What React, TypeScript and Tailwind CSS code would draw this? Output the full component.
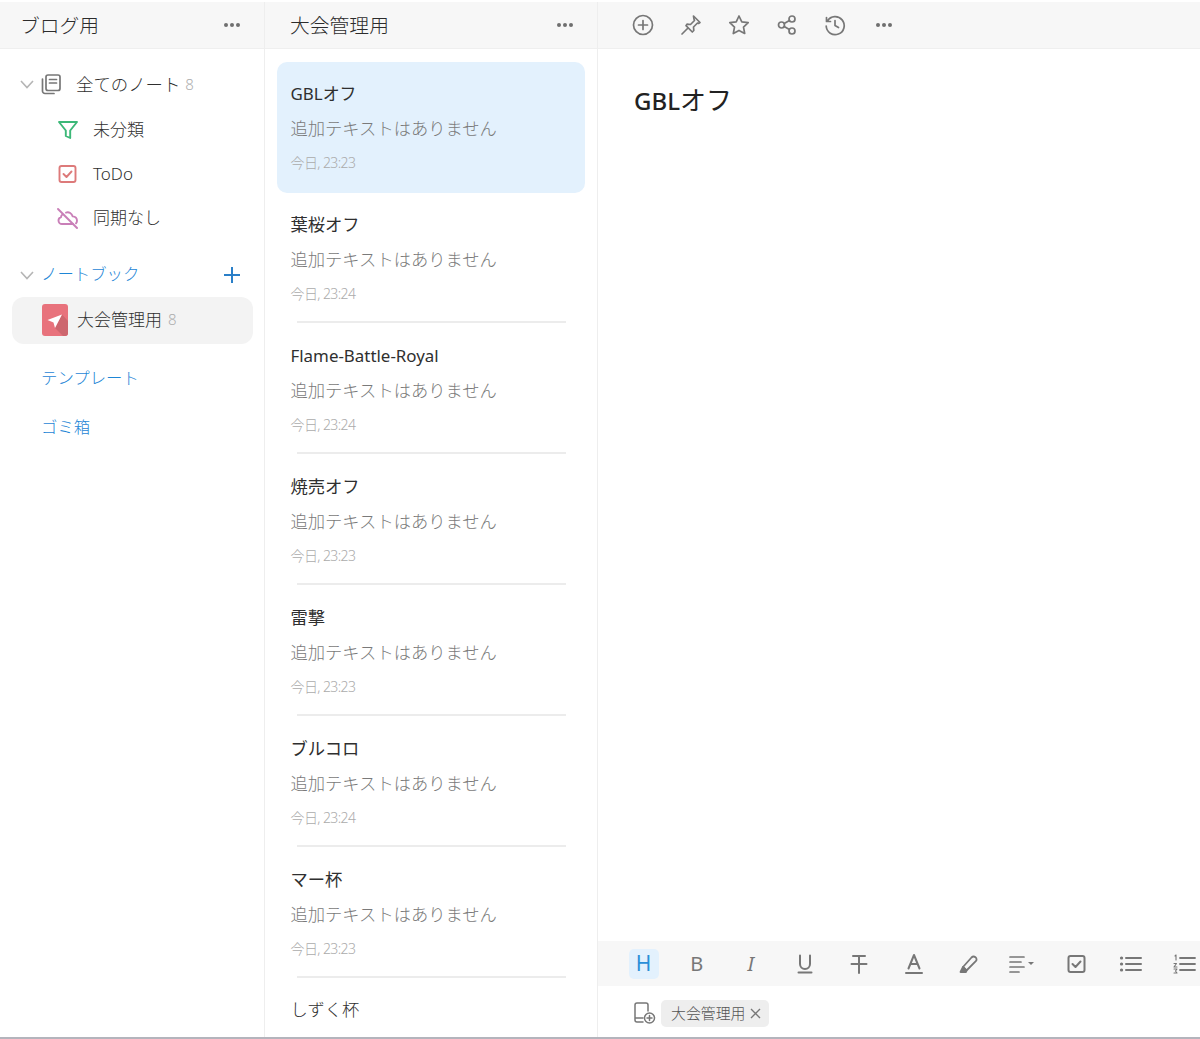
import React from "react";

const font = { fontFamily: '"Noto Sans", "Noto Sans CJK JP", sans-serif' };

function Dots() {
  return (
    <svg width="18" height="6" viewBox="0 0 18 6" fill="#6f6f6f">
      <circle cx="3" cy="3" r="2" />
      <circle cx="9" cy="3" r="2" />
      <circle cx="15" cy="3" r="2" />
    </svg>
  );
}

function Chevron() {
  return (
    <svg width="16" height="16" viewBox="0 0 16 16" fill="none" stroke="#b5b5b5" strokeWidth="1.6" className="shrink-0">
      <path d="M2 5l6 6.5L14 5" />
    </svg>
  );
}

function Sv({ children, w = 24, h = 24, sw = 1.7 }: { children: React.ReactNode; w?: number; h?: number; sw?: number }) {
  return (
    <svg width={w} height={h} viewBox={`0 0 ${w} ${h}`} fill="none" stroke="#777" strokeWidth={sw} strokeLinecap="round" strokeLinejoin="round" className="shrink-0">
      {children}
    </svg>
  );
}

const notes = [
  { t: "GBLオフ", d: "今日, 23:23", sel: true, small: true },
  { t: "葉桜オフ", d: "今日, 23:24" },
  { t: "Flame-Battle-Royal", d: "今日, 23:24", small: true },
  { t: "焼売オフ", d: "今日, 23:23" },
  { t: "雷撃", d: "今日, 23:23" },
  { t: "ブルコロ", d: "今日, 23:24" },
  { t: "マー杯", d: "今日, 23:23" },
];

function Note({ t, d, sel, small }: { t: string; d: string; sel?: boolean; small?: boolean }) {
  return (
    <div className={`relative h-[131px] w-[308px] shrink-0 rounded-[10px] pl-[13.5px] pt-[20px] ${sel ? "bg-[#e3f1fd]" : ""}`}>
      <div className={`h-[24px] leading-[24px] text-[#2f2f2f] ${small ? "text-[16.9px]" : "text-[17.3px]"}`}>{t}</div>
      <div className="mt-[11px] h-[24px] text-[17.3px] leading-[24px] font-light text-[#7a7a7a]">追加テキストはありません</div>
      <div className="mt-[12px] h-[20px] text-[14px] leading-[20px] font-light tracking-[-0.6px] text-[#ababab]">{d}</div>
      {!sel && <div className="absolute bottom-[1px] left-[20px] h-[2px] w-[269px] bg-[#ececec]" />}
    </div>
  );
}

export default function App() {
  return (
    <div style={font} className="flex h-[1039px] w-[1200px] flex-col overflow-hidden bg-white pt-[2px]">
      <div className="flex min-h-0 flex-1">
        {/* Sidebar */}
        <aside className="flex w-[265px] shrink-0 flex-col border-r border-[#eeeeee]">
          <header className="flex h-[47px] shrink-0 items-center justify-between border-b border-[#efefef] bg-[#f7f7f7] pl-[20px] pr-[23px]">
            <span className="pt-[2px] text-[19.8px] font-light text-[#2c2c2c]">ブログ用</span>
            <Dots />
          </header>
          <div className="flex flex-col pt-[12px]">
            <div className="flex h-[46px] items-center pl-[19px] text-[17.4px] font-light text-[#2f2f2f]">
              <Chevron />
              <span className="ml-[4px]">
                <Sv w={23} h={24}>
                  <rect x="7" y="3" width="14" height="15.5" rx="2" />
                  <path d="M10.5 7.5h7M10.5 11h7M3.5 7v12a2.5 2.5 0 0 0 2.5 2.5H15" />
                </Sv>
              </span>
              <span className="ml-[14px]">全てのノート</span>
              <span className="ml-[5px] text-[15px] text-[#adadad]">8</span>
            </div>
            <div className="flex h-[44px] items-center pl-[57px] pt-[2px] text-[17px] font-light text-[#2f2f2f]">
              <svg width="22" height="22" viewBox="0 0 22 22" fill="none" stroke="#3cb878" strokeWidth="1.9" strokeLinejoin="round" className="shrink-0">
                <path d="M2 3h18l-6.8 8.5V19l-4.4-2v-5.5z" />
              </svg>
              <span className="ml-[14px]">未分類</span>
            </div>
            <div className="flex h-[44px] items-center pl-[57px] pt-[2px] text-[17px] font-light text-[#2f2f2f]">
              <svg width="22" height="22" viewBox="0 0 22 22" fill="none" stroke="#dd7a7a" strokeWidth="1.9" strokeLinecap="round" strokeLinejoin="round" className="shrink-0">
                <rect x="2.5" y="3" width="16" height="16" rx="2" />
                <path d="M6.5 11l3 3 5-5.5" />
              </svg>
              <span className="ml-[14px]">ToDo</span>
            </div>
            <div className="flex h-[44px] items-center pl-[57px] pt-[2px] text-[17px] font-light text-[#2f2f2f]">
              <svg width="22" height="22" viewBox="0 0 22 22" fill="none" stroke="#c97fb8" strokeWidth="1.9" strokeLinecap="round" strokeLinejoin="round" className="shrink-0">
                <path d="M1 2l19 19" />
                <path d="M5.5 7.5C4.5 8.2 4 9.2 4 10.2 2.5 10.7 1.5 12 1.5 13.5c0 2 1.6 3.5 3.5 3.5h11M9 5.6c3-1 6 .8 6.6 3.8 2.6.3 4.4 2.2 4.4 4.3 0 1-.4 1.9-1 2.6" />
              </svg>
              <span className="ml-[14px]">同期なし</span>
            </div>
          </div>
          <div className="mt-[12px] flex h-[46px] items-center pl-[19px] pr-[23px] pt-[1px] text-[16.4px] font-light text-[#1e86d6]">
            <Chevron />
            <span className="ml-[6px]">ノートブック</span>
            <svg width="18" height="18" viewBox="0 0 18 18" stroke="#2a7fc8" strokeWidth="2" className="ml-auto shrink-0">
              <path d="M9 1v16M1 9h16" />
            </svg>
          </div>
          <div className="ml-[12px] mr-[11px] flex h-[47px] items-center rounded-[12px] bg-[#f3f3f3] pb-[2px] pl-[30px] text-[17px] font-light text-[#2f2f2f]">
            <svg width="26" height="32" viewBox="0 0 26 32" className="shrink-0">
              <rect width="26" height="32" rx="3" fill="#e8727c" />
              <path d="M20 10.5L26 17V29a3 3 0 0 1-3 3H21L13 24z" fill="#cd666e" />
              <path d="M5.5 16L20 10.5 13 24l-1.5-5.5z" fill="#fff" />
            </svg>
            <span className="ml-[9px]">大会管理用</span>
            <span className="ml-[6px] text-[15px] text-[#adadad]">8</span>
          </div>
          <div className="mt-[10px] flex h-[49px] items-center pl-[41px] text-[16.4px] font-light text-[#1e86d6]">テンプレート</div>
          <div className="flex h-[49px] items-center pl-[41px] text-[16.4px] font-light text-[#1e86d6]">ゴミ箱</div>
        </aside>

        {/* Note list */}
        <section className="flex w-[333px] shrink-0 flex-col border-r border-[#eeeeee]">
          <header className="flex h-[47px] shrink-0 items-center justify-between border-b border-[#efefef] bg-[#f7f7f7] pl-[25px] pr-[23px]">
            <span className="pt-[2px] text-[19.8px] font-light text-[#2c2c2c]">大会管理用</span>
            <Dots />
          </header>
          <div className="flex min-h-0 flex-1 flex-col overflow-hidden pl-[12px] pt-[13px]">
            {notes.map((n) => (
              <Note key={n.t} {...n} />
            ))}
            <div className="pl-[13.5px] pt-[19px] text-[17.3px] leading-[24px] font-light text-[#2f2f2f]">しずく杯</div>
          </div>
        </section>

        {/* Editor */}
        <main className="flex min-w-0 flex-1 flex-col">
          <header className="flex h-[47px] shrink-0 items-center gap-[24px] border-b border-[#efefef] bg-[#f7f7f7] pl-[33px]">
            <Sv>
              <circle cx="12" cy="12" r="9.5" />
              <path d="M12 7.5v9M7.5 12h9" />
            </Sv>
            <Sv>
              <path d="M14.5 3l6.5 6.5-1.5 1-1-.5-4 4 .3 3.5-1.5 1.5-6.3-6.3L8 11.2l3.5.3 4-4-.5-1.5zM9 15l-6 6" />
            </Sv>
            <Sv>
              <path d="M12 3l2.8 5.9 6.4.8-4.7 4.4 1.2 6.4L12 17.4l-5.7 3.1 1.2-6.4-4.7-4.4 6.4-.8z" />
            </Sv>
            <Sv>
              <circle cx="6.5" cy="12" r="3" />
              <circle cx="17" cy="6" r="3" />
              <circle cx="17" cy="18" r="3" />
              <path d="M9.2 10.5l5.2-3M9.2 13.5l5.2 3" />
            </Sv>
            <Sv>
              <path d="M4.5 8A9 9 0 1 1 3.2 13M3.5 4.5V8.5H7.5M12 7.5V12.5l3.5 2" />
            </Sv>
            <span className="ml-[4px]"><Dots /></span>
          </header>
          <div className="flex-1 pl-[36px] pt-[31px] text-[26px] leading-[40px] text-[#222]">
            <span className="text-[24px] font-medium">GBL</span><span className="font-normal">オフ</span>
          </div>
          <div className="flex h-[45px] shrink-0 items-center bg-[#f7f7f7] pl-[31px] text-[#777]">
            <div className="flex h-[30px] w-[30px] items-center justify-center rounded-[5px] bg-[#e3f1fd] pr-[1px] text-[21px] text-[#2a8fd8]">H</div>
            <div className="ml-[23px] w-[30px] text-center text-[20px]">B</div>
            <div className="ml-[24px] w-[30px] text-center text-[20px] italic">I</div>
            <div className="ml-[24px] flex w-[30px] justify-center">
              <Sv sw={2}>
                <path d="M7 3.5V12a5 5 0 0 0 10 0V3.5" />
                <path d="M5.5 20.5h13" />
              </Sv>
            </div>
            <div className="ml-[24px] flex w-[30px] justify-center">
              <Sv sw={2}>
                <path d="M6 4h12M12 4v17M4.5 12h15" />
              </Sv>
            </div>
            <div className="ml-[26px] flex w-[30px] justify-center">
              <Sv sw={2}>
                <path d="M6.5 16.5L12 3l5.5 13.5M8.3 12h7.4" />
                <path d="M4 21h16" />
              </Sv>
            </div>
            <div className="ml-[25px] flex w-[30px] justify-center">
              <Sv sw={1.8}>
                <path d="M9.5 18.5l-3.5-3.5 8.5-9.5c1-1 2.7-1.2 4-.2s1.4 2.8.3 3.9z" />
                <path d="M6 15l-2.5 5h5.5l.5-1.5z" fill="#777" />
              </Sv>
            </div>
            <div className="ml-[24px] flex w-[30px] justify-center">
              <Sv w={28} h={20}>
                <path d="M1 3h14M1 8h11M1 13h14M1 18h9" />
                <path d="M19 8h6l-3 3z" fill="#777" stroke="none" />
              </Sv>
            </div>
            <div className="ml-[24px] flex w-[30px] justify-center">
              <Sv sw={2}>
                <rect x="3.5" y="4" width="16" height="16" rx="2" />
                <path d="M7.5 12l3 3 5-5.5" />
              </Sv>
            </div>
            <div className="ml-[24px] flex w-[30px] justify-center">
              <Sv sw={2}>
                <path d="M7 6h15M7 12h15M7 18h15" />
                <path d="M2.5 6h.1M2.5 12h.1M2.5 18h.1" strokeWidth="3.2" />
              </Sv>
            </div>
            <div className="ml-[24px] flex w-[30px] justify-center">
              <Sv sw={1.8}>
                <path d="M7 6h15M7 12h15M7 18h15" />
                <path d="M2 4l1-1v5M1 11.5h2.5L1 15h3M1 17h3l-1.5 2L4 21H1" strokeWidth="1.1" />
              </Sv>
            </div>
          </div>
          <div className="flex h-[51px] shrink-0 items-center pl-[35px] pt-[3px]">
            <svg width="24" height="24" viewBox="0 0 24 24" fill="none" stroke="#777" strokeWidth="1.5" strokeLinecap="round" className="shrink-0">
              <path d="M15 10V4a2 2 0 0 0-2-2H4a2 2 0 0 0-2 2v15a2 2 0 0 0 2 2h6M2 17h8" />
              <circle cx="16.5" cy="17" r="5" />
              <path d="M16.5 14.5v5M14 17h5" />
            </svg>
            <div className="ml-[4px] flex h-[27px] items-center gap-[5px] rounded-[5px] bg-[#eeeeee] pl-[10px] pr-[8px] text-[14.9px] font-light text-[#555]">
              大会管理用
              <svg width="11" height="11" viewBox="0 0 11 11" stroke="#777" strokeWidth="1.4" className="shrink-0">
                <path d="M1 1l9 9M10 1l-9 9" />
              </svg>
            </div>
          </div>
        </main>
      </div>
      <div className="h-[2px] shrink-0 bg-[#b4b4bc]" />
    </div>
  );
}
